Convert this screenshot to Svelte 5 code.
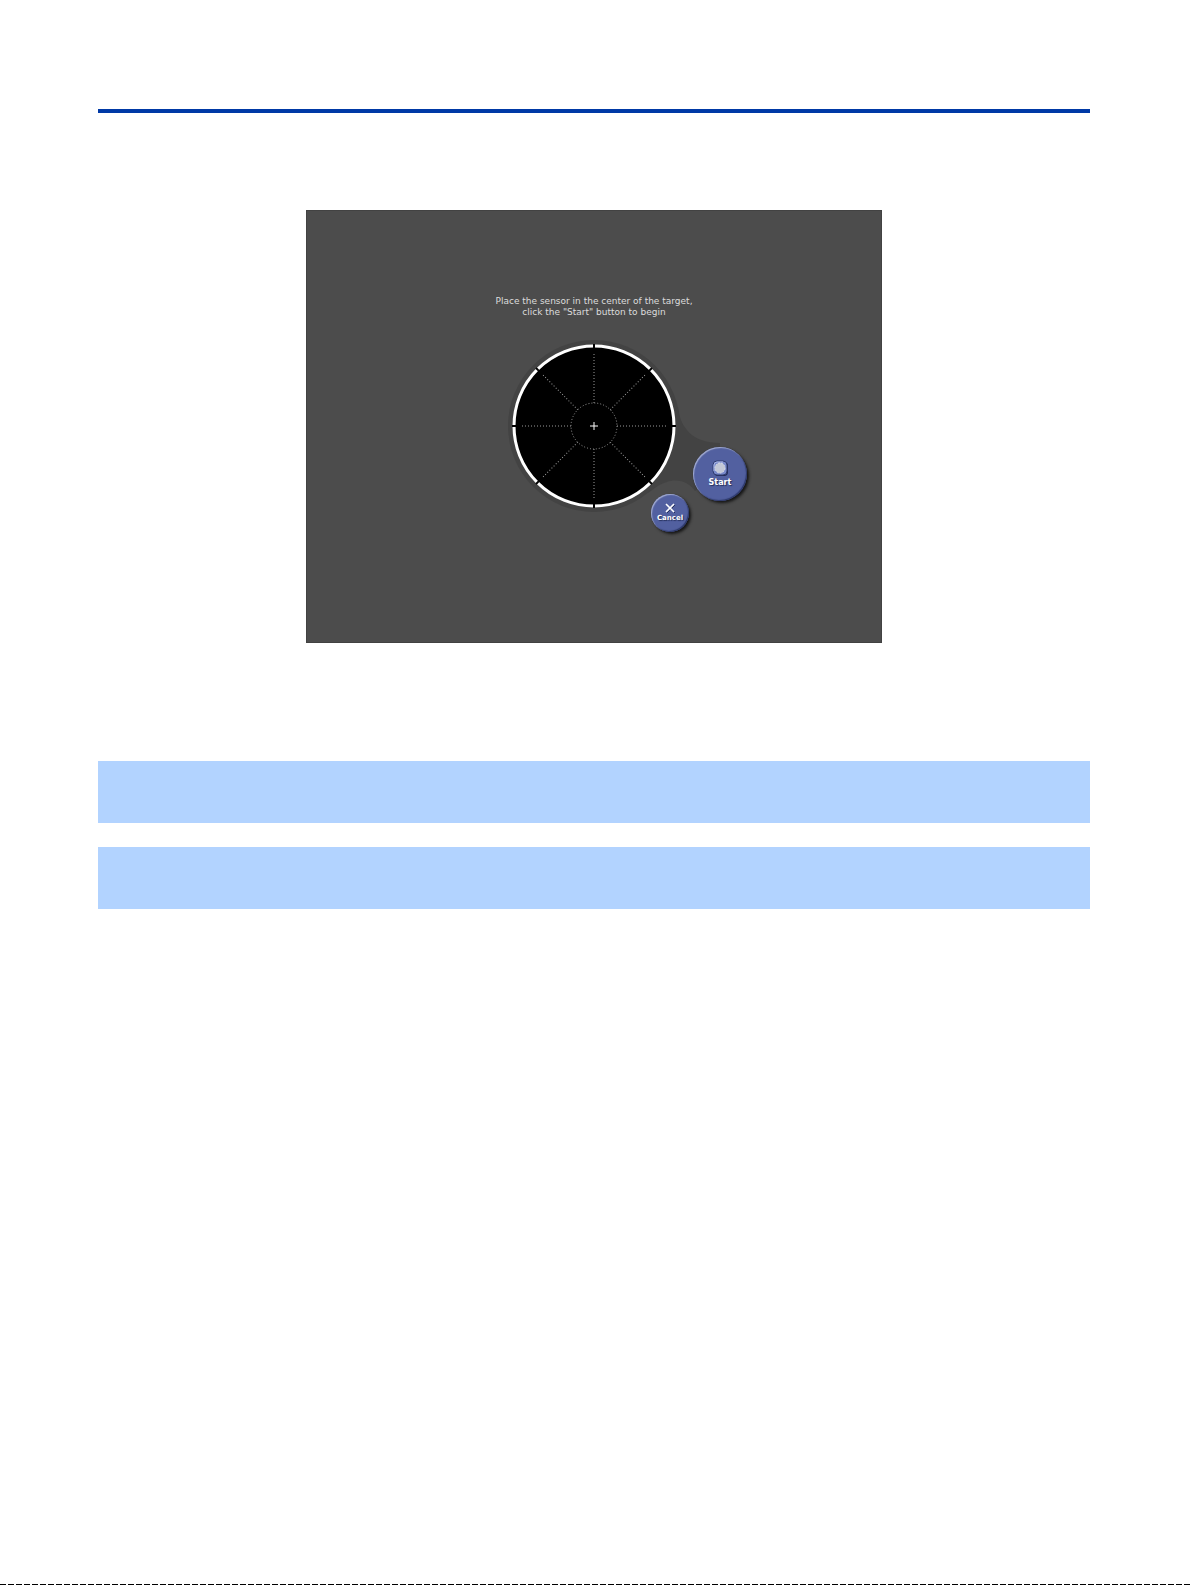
<script lang="ts">
	type Props = {
		onstart?: () => void;
		oncancel?: () => void;
	};

	let { onstart = () => {}, oncancel = () => {} }: Props = $props();

	const spokes = [0, 45, 90, 135, 180, 225, 270, 315];
	const notes = [1, 2];
</script>

<main class="page">
	<div class="content">
		<hr class="rule" />

		<section class="screen" aria-label="Sensor calibration">
			<p class="prompt">
				Place the sensor in the center of the target,<br />
				click the "Start" button to begin
			</p>

			<div class="stage">
				<svg class="target" viewBox="0 0 250 210" aria-hidden="true">
					<circle class="halo" cx="95" cy="95" r="86" />
					<path
						class="halo"
						d="M179 76 C181 97 194 112 221 112 L221 142 L196 160 C188 149 176 148 168 151 C160 153 155 158 149 162 Z"
					/>
					<circle class="ring" cx="95" cy="95" r="80" />
					{#each spokes as angle (angle)}
						<g transform="rotate({angle} 95 95)">
							<path class="notch" d="M173 95 H177" />
							<path class="dots" d="M118 95 H169" />
						</g>
					{/each}
					<circle class="dots" cx="95" cy="95" r="23" />
					<path class="cross" d="M91 95 H99 M95 91 V99" />
				</svg>

				<button class="round start" type="button" onclick={onstart}>
					<svg viewBox="0 0 16 16" width="16" height="16" aria-hidden="true">
						<rect x="2" y="2" width="14" height="14" rx="4" fill="#222b55" />
						<rect x="1" y="1" width="14" height="14" rx="4" fill="#7889c9" stroke="#303c70" />
						<path d="M2 11 V5 Q2 2 5 2 H11" fill="none" stroke="#a9b5e4" />
						<circle cx="8" cy="8" r="5" fill="#c3c8d6" stroke="#d9dce6" stroke-dasharray="2 1" />
					</svg>
					<span>Start</span>
				</button>
				<button class="round cancel" type="button" onclick={oncancel}>
					<svg viewBox="0 0 10 10" width="10" height="10" aria-hidden="true">
						<path d="M2 2 L10 10 M10 2 L2 10" stroke="#26305c" stroke-width="1" />
						<path d="M1 1 L9 9 M9 1 L1 9" stroke="#fff" stroke-width="1.6" />
					</svg>
					<span>Cancel</span>
				</button>
			</div>
		</section>

		<div class="notes">
			{#each notes as note (note)}
				<div class="note"></div>
			{/each}
		</div>
	</div>

	<div class="edge"></div>
</main>

<style>
	:global(body) {
		margin: 0;
		background: #fff;
	}
	.page {
		box-sizing: border-box;
		min-height: 100vh;
		display: flex;
		flex-direction: column;
		padding-top: 109px;
		font-family: 'DejaVu Sans', sans-serif;
	}
	.content {
		margin: 0 101px 0 98px;
	}
	.rule {
		height: 4px;
		margin: 0;
		border: 0;
		background: #0039a6;
	}
	.screen {
		box-sizing: border-box;
		width: 576px;
		max-width: 100%;
		margin: 97px auto 0;
		padding: 85px 0 101px;
		display: flex;
		flex-direction: column;
		align-items: center;
		background: #4c4c4c;
		border: 1px solid #424242;
	}
	.prompt {
		margin: 0;
		color: #dcdcdc;
		font-size: 9px;
		line-height: 11px;
		text-align: center;
	}
	.stage {
		position: relative;
		width: 250px;
		height: 210px;
		margin: 13px 0 0 60px;
	}
	.target {
		display: block;
		width: 100%;
		height: 100%;
	}
	.halo {
		fill: #434343;
	}
	.ring {
		fill: #000;
		stroke: #fff;
		stroke-width: 3;
	}
	.notch {
		stroke: #000;
		stroke-width: 2;
	}
	.dots {
		fill: none;
		stroke: #999;
		stroke-width: 1;
		stroke-dasharray: 1 2;
	}
	.cross {
		stroke: #fff;
		stroke-width: 1;
	}

	.round {
		position: absolute;
		box-sizing: border-box;
		display: flex;
		flex-direction: column;
		align-items: center;
		justify-content: center;
		padding: 0 0 2px;
		border: 0;
		border-radius: 50%;
		background: #5260a0;
		box-shadow:
			inset 1px 1px 1px #a3acd0,
			inset -1px -1px 1px #2c3768,
			2px 2px 3px #151515;
		color: #fff;
		font-family: inherit;
		font-weight: bold;
		line-height: 8px;
		text-shadow: 1px 1px 1px #26305c;
		cursor: pointer;
	}
	.start {
		left: 194px;
		top: 116px;
		width: 54px;
		height: 54px;
		gap: 3px;
		font-size: 8px;
	}
	.cancel {
		left: 152px;
		top: 163px;
		width: 38px;
		height: 38px;
		gap: 1px;
		font-size: 7px;
	}

	.notes {
		display: flex;
		flex-direction: column;
		gap: 24px;
		margin-top: 118px;
	}
	.note {
		height: 62px;
		background: #b2d3ff;
	}
	.edge {
		height: 1px;
		margin-top: auto;
		background: repeating-linear-gradient(90deg, #000 0 6px, #fff 6px 8px);
	}
</style>
